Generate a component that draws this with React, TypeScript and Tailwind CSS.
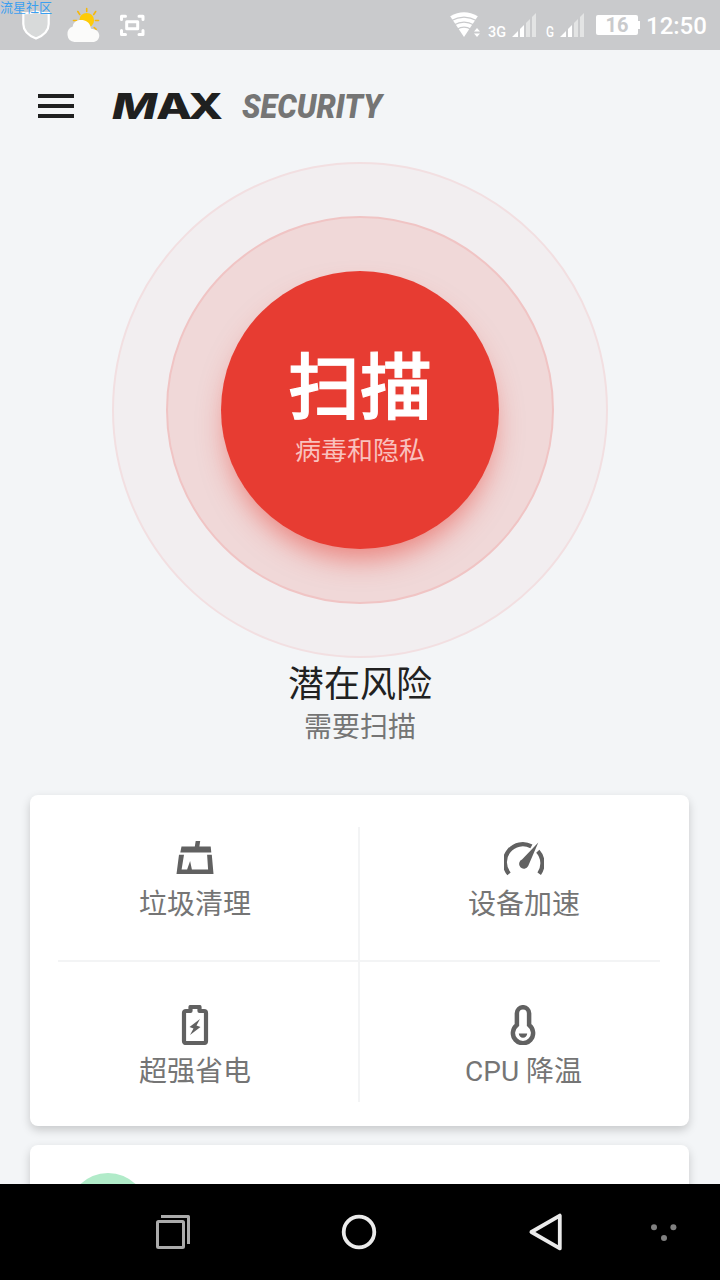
import React, { FC, ReactNode } from 'react';

const ShieldIcon: FC = () => (
  <svg className="ml-[21px] h-[30px] w-[30px]" viewBox="0 0 30 30">
    <path
      d="M15 1.400C11 3 6 3.400 2.300 3.200V14c0 6.800 5.200 11.500 12.700 14.600C22.500 25.500 27.700 20.800 27.700 14V3.200C24 3.400 19 3 15 1.400z"
      fill="#d8dada"
      stroke="#fff"
      strokeWidth="2.200"
    />
  </svg>
);

const WeatherIcon: FC = () => (
  <svg className="ml-[15px] h-[36px] w-[36px]" viewBox="0 0 36 36">
    <g stroke="#f5b80c" strokeWidth="1.600" strokeLinecap="round">
      <path d="M20.700 1.500v3M11.800 4.500l2 3M29.700 4.500l-2 3M7.500 13.500h3M29.500 13.500h3M28.200 20.500l2 1.800" />
    </g>
    <circle cx="20.700" cy="13.300" r="7.400" fill="#fecb08" />
    <path
      d="M8.500 35a8 8 0 0 1-1.700-15.500C7 15.500 10.500 13 15 13c5 0 8 2.300 9.400 6.200l.6 2.500c5 .3 8.300 3 8.300 6.800S30.500 35 26.500 35z"
      fill="#fbfbfa"
    />
  </svg>
);

const ScreenshotIcon: FC = () => (
  <svg
    className="ml-[17px] h-[23px] w-[26px]"
    viewBox="0 0 26 23"
    fill="none"
    stroke="#fff"
    strokeLinejoin="round"
    strokeLinecap="round"
  >
    <path
      d="M2.500 5.500V2.300H6.500M20 2.300h4v3.200M2.500 16.500v4H6.500M20 20.500h4v-4"
      strokeWidth="3"
    />
    <rect x="7.700" y="7.800" width="11" height="7" strokeWidth="3" />
  </svg>
);

const WifiIcon: FC = () => (
  <svg className="h-[26px] w-[32px]" viewBox="0 0 32 26">
    <path d="M.2 4.200Q14 -3.500 27.800 4.200L14 25z" fill="#fff" />
    <g fill="none" stroke="#c9cacc" strokeWidth="1.300">
      <path d="M1 8.800q13-7.200 26 0M4 13q10-5.800 20 0M7 17.300q7-4.300 14 0" />
    </g>
    <path d="M24 19.500l3-3.500 3 3.500zM24 21.500l3 3.500 3-3.500z" fill="#fff" />
  </svg>
);

const SignalIcon: FC = () => (
  <svg className="h-[24px] w-[24px]" viewBox="0 0 24 24">
    <path d="M0 24l6-6v6zM8 24v-8l4-4v12z" fill="#fff" />
    <path d="M14 24V10l4-4v18zM20 24V4l4-4v24z" fill="#e3e4e4" />
  </svg>
);

const NetworkLabel: FC<{ text: string; width: number }> = ({ text, width }) => (
  <svg className="-mb-[5px] h-[22px]" width={width} viewBox={`0 0 ${width} 22`}>
    <text
      x="0"
      y="17"
      textLength={width}
      lengthAdjust="spacingAndGlyphs"
      className="fill-white font-['Roboto',sans-serif] text-[14px] font-medium"
    >
      {text}
    </text>
  </svg>
);

const StatusBar: FC = () => (
  <div className="relative flex h-[50px] shrink-0 items-center bg-[#c9cacc] font-['Roboto',sans-serif]">
    <span className="absolute top-0 left-0 font-['Noto_Sans_CJK_SC',sans-serif] text-[13px] leading-[13px] whitespace-nowrap text-[#3b9ff0]">
      流星社区
    </span>
    <ShieldIcon />
    <WeatherIcon />
    <ScreenshotIcon />
    <div className="ml-auto flex items-center pr-[12px]">
      <WifiIcon />
      <div className="ml-[6px] flex items-end gap-[6px] pb-px">
        <NetworkLabel text="3G" width={18} />
        <SignalIcon />
      </div>
      <div className="ml-[10px] flex items-end gap-[6px] pb-px">
        <NetworkLabel text="G" width={8} />
        <SignalIcon />
      </div>
      <div className="ml-[12px] flex items-center">
        <span className="flex h-[20px] w-[42px] items-center justify-center rounded-[2px] bg-white text-[20px] leading-none font-bold text-[#c9cacc]">
          16
        </span>
        <span className="h-[8px] w-[2px] bg-white" />
      </div>
      <span className="ml-[6px] w-[62px] pt-[2px] text-[24px] leading-[48px] font-medium text-white">
        12:50
      </span>
    </div>
  </div>
);

const Header: FC = () => (
  <header className="flex h-[112px] shrink-0 items-center pl-[38px]">
    <button className="flex w-[36px] flex-col gap-[6px]" aria-label="菜单">
      <span className="h-[4px] bg-[#1f2020]" />
      <span className="h-[4px] bg-[#1f2020]" />
      <span className="h-[4px] bg-[#1f2020]" />
    </button>
    <svg className="ml-[36px] h-[60px] w-[280px]" viewBox="0 0 280 60">
      <text
        y="43"
        className="fill-[#1f2020] font-['Inter',sans-serif] text-[36px] font-extrabold"
      >
        <tspan x="2" textLength="45" lengthAdjust="spacingAndGlyphs" fontStyle="italic">
          M
        </tspan>
        <tspan x="46" textLength="36" lengthAdjust="spacingAndGlyphs">
          A
        </tspan>
        <tspan x="78" textLength="35" lengthAdjust="spacingAndGlyphs">
          X
        </tspan>
      </text>
      <text
        x="132"
        y="42"
        textLength="140"
        lengthAdjust="spacingAndGlyphs"
        className="fill-[#757575] font-['Roboto',sans-serif] text-[34px] font-black italic"
      >
        SECURITY
      </text>
    </svg>
  </header>
);

const ScanButton: FC = () => (
  <div className="mx-auto flex size-[496px] shrink-0 items-center justify-center rounded-full border-2 border-[#f2dfe1] bg-[#f2eef0]">
    <div className="flex size-[388px] items-center justify-center rounded-full border-2 border-[#f0c4c4] bg-[#f0d8d8]">
      <button className="flex size-[278px] flex-col items-center rounded-full bg-[#e73c32] pt-[78px] shadow-[0_16px_28px_-6px_rgba(231,60,50,0.55)]">
        <span className="text-[72px] leading-[80px] font-medium text-white [-webkit-text-stroke:1.2px_white]">
          扫描
        </span>
        <span className="mt-[4px] text-[26px] leading-[36px] text-[#f9c1be]">
          病毒和隐私
        </span>
      </button>
    </div>
  </div>
);

const CleanIcon: FC = () => (
  <svg className="h-[40px] w-[40px]" viewBox="0 0 40 40" fill="#616161">
    <path d="M20.700 1h4.500l-.8 5.500h11.300l.6 6H5.300l1.200-6h13.300zM4 14.700h5L6.600 29.500h5.500l3-8.500 1.800 8.500h16.200l-1-14.800h4.700L38.500 34H1.500z" />
  </svg>
);

const BoostIcon: FC = () => (
  <svg className="h-[40px] w-[40px]" viewBox="0 0 40 40">
    <path
      d="M5 33.800A18 18 0 0 1 27.400 6.400M33.800 11.300A18 18 0 0 1 35.200 33.800"
      fill="none"
      stroke="#616161"
      strokeWidth="4.300"
    />
    <path d="M34.300 2.500L24.200 26a4.800 4.800 0 1 1-6.200-6.500z" fill="#616161" />
  </svg>
);

const BatteryIcon: FC = () => (
  <svg className="h-[40px] w-[40px]" viewBox="0 0 40 40">
    <path
      d="M15.500 2h9v4H29q2 0 2 2v28q0 2-2 2H11q-2 0-2-2V8q0-2 2-2h4.500z"
      fill="none"
      stroke="#616161"
      strokeWidth="4.200"
      strokeLinejoin="round"
    />
    <path d="M25 14l-10.500 8 4 1.500L15 30l10.500-8-4-1.500z" fill="#616161" />
  </svg>
);

const CoolIcon: FC = () => (
  <svg className="h-[40px] w-[40px]" viewBox="0 0 40 40">
    <path
      d="M12.900 8.300a6.100 6.100 0 0 1 12.200 0v11.700a10.100 10.100 0 1 1-12.200 0z"
      fill="none"
      stroke="#616161"
      strokeWidth="4.500"
    />
    <path d="M14.800 28.500h8.400a4.200 4.200 0 0 1-8.400 0z" fill="#616161" />
  </svg>
);

const Tool: FC<{ label: string; children: ReactNode }> = ({ label, children }) => (
  <button className="flex flex-col items-center gap-[4px]">
    {children}
    <span className="text-[28px] leading-[42px] text-[#757575]">{label}</span>
  </button>
);

const ToolCard: FC = () => (
  <section className="mr-[31px] ml-[30px] h-[331px] shrink-0 rounded-[8px] bg-white px-[28px] pt-[32px] shadow-[0_4px_10px_rgba(0,0,0,0.18)]">
    <div className="grid h-[275px] grid-cols-[300px_2px_300px] grid-rows-[133px_2px_140px]">
      <div className="-ml-[26px] flex items-start justify-center pt-[13px]">
        <Tool label="垃圾清理">
          <CleanIcon />
        </Tool>
      </div>
      <div className="row-span-3 bg-[#f3f4f5]" />
      <div className="-mr-[28px] flex items-start justify-center pt-[13px]">
        <Tool label="设备加速">
          <BoostIcon />
        </Tool>
      </div>
      <div className="bg-[#f3f4f5]" />
      <div className="bg-[#f3f4f5]" />
      <div className="-ml-[26px] flex items-start justify-center pt-[43px] *:gap-[6px]">
        <Tool label="超强省电">
          <BatteryIcon />
        </Tool>
      </div>
      <div className="-mr-[27px] flex items-start justify-center pt-[43px] *:gap-[6px]">
        <Tool label="CPU 降温">
          <CoolIcon />
        </Tool>
      </div>
    </div>
  </section>
);

const NavigationBar: FC = () => (
  <nav className="flex h-[96px] shrink-0 items-center bg-black">
    <svg
      className="ml-[156px] h-[34px] w-[34px]"
      viewBox="0 0 34 34"
      fill="none"
      stroke="#ababab"
      strokeWidth="3"
      strokeLinejoin="round"
    >
      <rect x="1.500" y="6.500" width="26" height="26" rx="1" />
      <path d="M5 1.500h27.500V29" />
    </svg>
    <svg className="ml-[151px] h-[36px] w-[36px]" viewBox="0 0 36 36">
      <circle cx="18" cy="18" r="15.300" fill="none" stroke="#ebebeb" strokeWidth="3.800" />
    </svg>
    <svg className="ml-[151px] h-[40px] w-[36px]" viewBox="0 0 36 40">
      <path
        d="M31.800 3.600v32.800L3.400 20z"
        fill="none"
        stroke="#ebebeb"
        strokeWidth="3.800"
        strokeLinejoin="round"
      />
    </svg>
    <svg className="ml-[86px] h-[20px] w-[28px]" viewBox="0 0 28 20" fill="#808080">
      <circle cx="4" cy="5.300" r="3" />
      <circle cx="23.400" cy="5.300" r="3" />
      <circle cx="14" cy="16" r="3" />
    </svg>
  </nav>
);

export default function App() {
  return (
    <div className="flex h-screen w-full flex-col overflow-hidden bg-[#f3f5f7] font-['Roboto','Noto_Sans_CJK_SC',sans-serif]">
      <StatusBar />
      <Header />
      <main className="flex min-h-0 flex-1 flex-col overflow-hidden">
        <ScanButton />
        <div className="flex h-[137px] shrink-0 flex-col items-center">
          <h1 className="mt-[4px] text-[36px] leading-[46px] text-[#212121]">潜在风险</h1>
          <p className="-mt-px text-[28px] leading-[42px] text-[#757575]">需要扫描</p>
        </div>
        <ToolCard />
        <section className="mt-[19px] mr-[31px] ml-[30px] h-[160px] shrink-0 rounded-[8px] bg-white pt-[28px] pl-[38px] shadow-[0_4px_10px_rgba(0,0,0,0.18)]">
          <div className="size-[80px] rounded-full bg-[#b1ebc9]" />
        </section>
      </main>
      <NavigationBar />
    </div>
  );
}
